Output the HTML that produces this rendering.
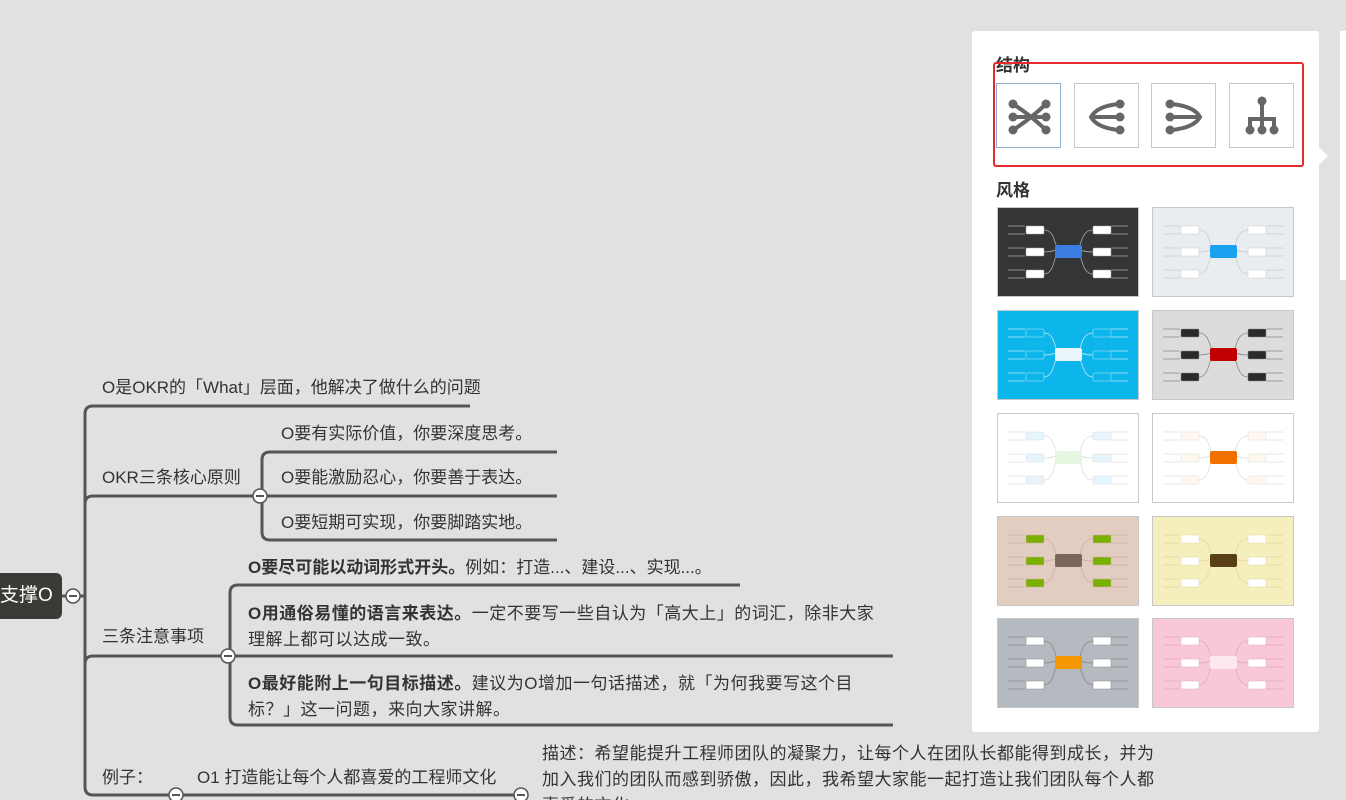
<!DOCTYPE html>
<html><head><meta charset="utf-8"><style>
*{margin:0;padding:0;box-sizing:border-box}
html,body{width:1346px;height:800px;overflow:hidden}
body{background:#e1e1e1;font-family:"Liberation Sans","Noto Sans CJK SC",sans-serif;color:#333;position:relative}
.t{position:absolute;font-size:17px;white-space:nowrap;line-height:20px}
.ls{letter-spacing:0.5px}
.b{font-weight:bold}
.panel{position:absolute;left:972px;top:31px;width:347px;height:701px;background:#fff;border-radius:3px}
.h{position:absolute;font-size:17px;font-weight:bold;color:#333}
.ic{position:absolute;top:83px;width:65px;height:65px;border:1px solid #c8c8c8;background:#fff}
.th{position:absolute;width:142px;height:90px;border:1px solid #c8c8c8}
</style></head><body>
<svg width="1346" height="800" style="position:absolute;left:0;top:0" fill="none" stroke="#555" stroke-width="3">
<path d="M470 406 H93 Q85 406 85 414 V787 Q85 795 93 795 H520"/>
<path d="M85 504 Q85 496 93 496 H262"/>
<path d="M557 452 H270 Q262 452 262 460 V532 Q262 540 270 540 H557"/>
<path d="M262 496 H557"/>
<path d="M85 664 Q85 656 93 656 H893"/>
<path d="M740 585 H238 Q230 585 230 593 V717 Q230 725 238 725 H893"/>
<path d="M62 596 H85"/>
</svg>
<div style="position:absolute;left:-10px;top:573px;width:72px;height:46px;background:#3a3a36;border-radius:6px;color:#fff;font-size:19px;line-height:46px;padding-left:10px">支撑O</div>
<svg width="1346" height="800" style="position:absolute;left:0;top:0">
<g fill="#fff" stroke="#555" stroke-width="1.5">
<circle cx="73" cy="596" r="7"/><circle cx="260" cy="496" r="7"/><circle cx="228" cy="656" r="7"/><circle cx="176" cy="795" r="7"/><circle cx="521" cy="795" r="7"/></g>
<g stroke="#555" stroke-width="2"><path d="M69 596h8M256 496h8M224 656h8M172 795h8M517 795h8"/></g>
</svg>
<div class="t" style="left:102px;top:378px">O是OKR的「What」层面，他解决了做什么的问题</div>
<div class="t" style="left:102px;top:468px">OKR三条核心原则</div>
<div class="t" style="left:281px;top:424px">O要有实际价值，你要深度思考。</div>
<div class="t" style="left:281px;top:468px">O要能激励忍心，你要善于表达。</div>
<div class="t" style="left:281px;top:513px">O要短期可实现，你要脚踏实地。</div>
<div class="t" style="left:102px;top:627px">三条注意事项</div>
<div class="t" style="left:248px;top:558px"><span class="b">O要尽可能以动词形式开头。</span>例如：打造...、建设...、实现...。</div>
<div class="t ls" style="left:248px;top:601px;line-height:26px"><span class="b">O用通俗易懂的语言来表达。</span>一定不要写一些自认为「高大上」的词汇，除非大家<br>理解上都可以达成一致。</div>
<div class="t ls" style="left:248px;top:671px;line-height:26px"><span class="b">O最好能附上一句目标描述。</span>建议为O增加一句话描述，就「为何我要写这个目<br>标？」这一问题，来向大家讲解。</div>
<div class="t" style="left:102px;top:768px">例子：</div>
<div class="t" style="left:197px;top:768px">O1 打造能让每个人都喜爱的工程师文化</div>
<div class="t ls" style="left:542px;top:741px;line-height:26px">描述：希望能提升工程师团队的凝聚力，让每个人在团队长都能得到成长，并为<br>加入我们的团队而感到骄傲，因此，我希望大家能一起打造让我们团队每个人都<br>喜爱的文化</div>

<div style="position:absolute;left:1340px;top:31px;width:10px;height:249px;background:#fff"></div>
<div class="panel"></div>
<div style="position:absolute;left:1318px;top:146px;width:0;height:0;border:10px solid transparent;border-left-color:#fff"></div>
<div class="h" style="left:996px;top:51px">结构</div>
<div class="h" style="left:996px;top:176px">风格</div>
<div class="ic" style="left:996px;border-color:#8fb1d6"><svg width="65" height="65" fill="#666" stroke="#666" stroke-width="4"><path d="M16 20Q32 30 49 46M16 46Q32 36 49 20M16 33H49" fill="none"/><circle cx="16" cy="20" r="4.5" stroke="none"/><circle cx="16" cy="33" r="4.5" stroke="none"/><circle cx="16" cy="46" r="4.5" stroke="none"/><circle cx="49" cy="20" r="4.5" stroke="none"/><circle cx="49" cy="33" r="4.5" stroke="none"/><circle cx="49" cy="46" r="4.5" stroke="none"/></svg></div>
<div class="ic" style="left:1074px"><svg width="65" height="65" fill="#666" stroke="#666" stroke-width="4"><path d="M44 20Q22 22 16 33Q22 44 44 46M16 33H44" fill="none"/><circle cx="45" cy="20" r="4.5" stroke="none"/><circle cx="45" cy="33" r="4.5" stroke="none"/><circle cx="45" cy="46" r="4.5" stroke="none"/></svg></div>
<div class="ic" style="left:1151px"><svg width="65" height="65" fill="#666" stroke="#666" stroke-width="4"><path d="M19 20Q42 22 48 33Q42 44 19 46M19 33H48" fill="none"/><circle cx="18" cy="20" r="4.5" stroke="none"/><circle cx="18" cy="33" r="4.5" stroke="none"/><circle cx="18" cy="46" r="4.5" stroke="none"/></svg></div>
<div class="ic" style="left:1229px"><svg width="65" height="65" fill="#666" stroke="#666" stroke-width="4"><path d="M32 17V45M20 45V35H44V45" fill="none"/><circle cx="32" cy="17" r="4.5" stroke="none"/><circle cx="20" cy="46" r="4.5" stroke="none"/><circle cx="32" cy="46" r="4.5" stroke="none"/><circle cx="44" cy="46" r="4.5" stroke="none"/></svg></div>
<div style="position:absolute;left:993px;top:62px;width:311px;height:105px;border:2px solid #e52b2b;border-radius:3px"></div>
<div id="thumbs"></div>
<script>
var cfg=[
["#333537","#3b7de0","#fff","#aaa","#fff"],
["#e7edf0","#1aa2f0","#fff","#ccc","#fff"],
["#0cb5ea","#e8f6fc","transparent","#bfe9f9","#fff"],
["#dcdcdc","#c00000","#2a2a2a","#888","#fff"],
["#fff","#e7f6e0","#e6f4fc","#ddd","#fff"],
["#fff","#f07000","#fff8ee","#ddd","#fff"],
["#e2cdc0","#7a665d","#7cb000","#c8b0a4","#fff"],
["#f5efbd","#5a3e16","#fff","#e0d8a0","#fff"],
["#b5bac0","#f39800","#fff","#888","#fff"],
["#f8c8d8","#fde8ef","#fff","#e0a8b8","#fff"]];
var h="";
cfg.forEach(function(c,i){
var x=i%2?1152:997,y=[207,310,413,516,618][i>>1];
var s='<svg width="140" height="88" viewBox="0 0 140 88"><rect width="140" height="88" fill="'+c[0]+'"/><g fill="none" stroke="'+c[3]+'" stroke-width="0.8">';
[22,44,66].forEach(function(by){s+='<path d="M62 44C56 40 58 '+by+' 46 '+by+'M78 44C84 40 82 '+by+' 95 '+by+'"/><path d="M10 '+(by-4)+'H27M10 '+(by+4)+'H27M113 '+(by-4)+'H130M113 '+(by+4)+'H130"/>';});
s+='</g>';
[22,44,66].forEach(function(by){s+='<rect x="28" y="'+(by-4)+'" width="18" height="8" rx="1" fill="'+c[2]+'" stroke="'+c[3]+'" stroke-width="0.5"/><rect x="95" y="'+(by-4)+'" width="18" height="8" rx="1" fill="'+c[2]+'" stroke="'+c[3]+'" stroke-width="0.5"/>';});
s+='<rect x="57" y="37" width="27" height="13" rx="2" fill="'+c[1]+'"/></svg>';
h+='<div class="th" style="left:'+x+'px;top:'+y+'px">'+s+'</div>';});
document.getElementById("thumbs").innerHTML=h;
</script>
</body></html>
